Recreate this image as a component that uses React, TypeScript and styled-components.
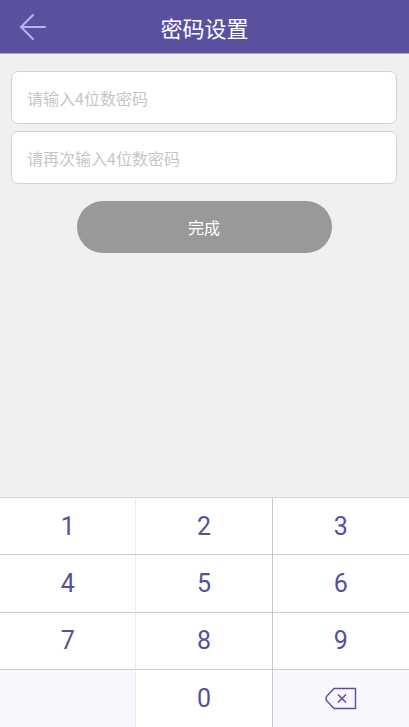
import React from 'react';
import styled, { createGlobalStyle } from 'styled-components';

const GlobalStyle = createGlobalStyle`
	html, body {
		margin: 0;
		padding: 0;
		background: #f0f0f0;
		font-family: Roboto, "Noto Sans CJK SC", sans-serif;
	}
	* {
		box-sizing: border-box;
	}
`;

const Page = styled.div`
	height: 100vh;
	display: flex;
	flex-direction: column;
	background: #f0f0f0;
`;

const Header = styled.header`
	height: 54px;
	flex-shrink: 0;
	background: #5951a0;
	border-bottom: 1px solid #aaa5d4;
	display: flex;
	align-items: center;
	justify-content: center;
	position: relative;
`;

const BackButton = styled.button`
	position: absolute;
	left: 17px;
	top: 11px;
	width: 32px;
	height: 32px;
	padding: 0;
	border: none;
	background: transparent;
	display: flex;
	align-items: center;
	justify-content: center;
`;

const Title = styled.h1`
	margin: 0;
	color: #fff;
	font-size: 22px;
	font-weight: 400;
	font-family: "Noto Sans CJK SC", sans-serif;
`;

const Form = styled.div`
	padding: 17px 12px 0 11px;
	display: flex;
	flex-direction: column;
	gap: 7px;
`;

const Field = styled.input`
	height: 53px;
	width: 100%;
	border: 1px solid #d2d2d2;
	border-radius: 7px;
	background: #fff;
	padding: 0 15px;
	font-size: 16px;
	font-family: "Noto Sans CJK SC", sans-serif;
	outline: none;
	&::placeholder {
		color: #c6c6c6;
	}
`;

const Submit = styled.button`
	align-self: center;
	margin-top: 10px;
	width: 255px;
	height: 52px;
	border: none;
	border-radius: 26px;
	background: #999999;
	color: #fff;
	font-size: 16px;
	font-family: "Noto Sans CJK SC", sans-serif;
`;

const Keypad = styled.div`
	margin-top: auto;
	display: grid;
	grid-template-columns: repeat(3, 1fr);
	grid-auto-rows: 57.25px;
	border-top: 1px solid #d4d4d4;
	background: #fff;
`;

const Key = styled.button<{ $col: number; $muted?: boolean; $last?: boolean }>`
	border: none;
	border-bottom: ${({ $last }) => ($last ? 'none' : '1px solid #cdcdcd')};
	border-right: ${({ $col }) =>
		$col === 0 ? '1px solid #ececec' : $col === 1 ? '1px solid #c8c8c8' : 'none'};
	background: ${({ $muted }) => ($muted ? '#f8f7fd' : '#fff')};
	color: #574f99;
	font-family: Roboto, sans-serif;
	font-size: 25px;
	font-weight: 400;
	display: flex;
	align-items: center;
	justify-content: center;
	padding: 0;
`;

const ArrowIcon = () => (
	<svg width="28" height="28" viewBox="0 0 28 28" fill="none">
		<path d="M26 14H3M14 2L2 14l12 12" stroke="#b9b2ee" strokeWidth="2" strokeLinecap="round" />
	</svg>
);

const BackspaceIcon = () => (
	<svg width="32" height="23" viewBox="0 0 32 23" fill="none">
		<path
			d="M9 1.5h21.5v20H9L1.5 13.5Q0.5 11.5 1.5 9.5Z"
			stroke="#5951a0"
			strokeWidth="1.4"
			strokeLinejoin="round"
		/>
		<path d="M13 7.5l8 8M21 7.5l-8 8" stroke="#5951a0" strokeWidth="1.6" />
	</svg>
);

const keys = ['1', '2', '3', '4', '5', '6', '7', '8', '9', '', '0', 'del'];

export default function App() {
	return (
		<Page>
			<GlobalStyle />
			<Header>
				<BackButton aria-label="返回">
					<ArrowIcon />
				</BackButton>
				<Title>密码设置</Title>
			</Header>
			<Form>
				<Field type="password" placeholder="请输入4位数密码" />
				<Field type="password" placeholder="请再次输入4位数密码" />
				<Submit>完成</Submit>
			</Form>
			<Keypad>
				{keys.map((k, i) => (
					<Key key={i} $col={i % 3} $muted={k === '' || k === 'del'} $last={i >= 9}>
						{k === 'del' ? <BackspaceIcon /> : k}
					</Key>
				))}
			</Keypad>
		</Page>
	);
}
